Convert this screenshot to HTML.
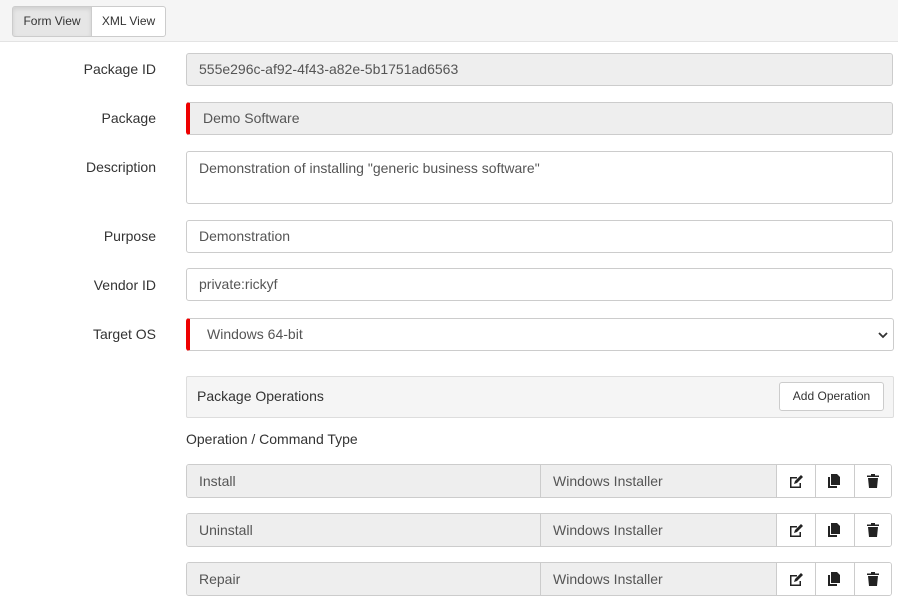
<!DOCTYPE html>
<html><head><style>
*{box-sizing:border-box;margin:0;padding:0}
body{width:898px;height:605px;overflow:hidden;background:#fff;font-family:"Liberation Sans",sans-serif;font-size:14px;color:#333;position:relative}
.top{position:absolute;left:0;top:0;width:898px;height:42px;background:#f5f5f5;border-bottom:1px solid #e3e3e3}
.btn{position:absolute;top:6px;height:31px;border:1px solid #ccc;font-size:12px;line-height:29px;text-align:center;color:#333}
.lbl{position:absolute;right:742px;font-size:14px;color:#333;text-align:right}
.in{position:absolute;left:186px;width:707px;height:33px;border:1px solid #ccc;border-radius:3px;padding-left:12px;line-height:31px;color:#555;font-size:14px}
.ro{background:#eee}
.req{border-left:4px solid #e00;padding-left:13px}
.row{position:absolute;left:186px;width:706px;height:34px;border:1px solid #ccc;border-radius:3px;overflow:hidden}
.row>div{position:absolute;top:0;height:32px;line-height:32px;color:#555}
.ic{width:39px;border-left:1px solid #ccc;background:#fff}
.ic svg{position:absolute;left:12px;top:9px}
</style></head><body>
<div class="top">
<div class="btn" style="left:12px;width:80px;background:#e6e6e6;border-radius:3px 0 0 3px;box-shadow:inset 0 2px 4px rgba(0,0,0,.1)">Form View</div>
<div class="btn" style="left:91px;width:75px;background:#fff;border-radius:0 3px 3px 0">XML View</div>
</div>
<div class="lbl" style="top:61px">Package ID</div>
<div class="in ro" style="top:53px">555e296c-af92-4f43-a82e-5b1751ad6563</div>
<div class="lbl" style="top:110px">Package</div>
<div class="in ro req" style="top:102px">Demo Software</div>
<div class="lbl" style="top:159px">Description</div>
<div class="in" style="top:151px;height:53px;line-height:20px;padding-top:6px">Demonstration of installing "generic business software"</div>
<div class="lbl" style="top:228px">Purpose</div>
<div class="in" style="top:220px">Demonstration</div>
<div class="lbl" style="top:277px">Vendor ID</div>
<div class="in" style="top:268px">private:rickyf</div>
<div class="lbl" style="top:326px">Target OS</div>
<div class="in req" style="top:318px;width:708px;padding-left:17px">Windows 64-bit<svg style="position:absolute;right:5px;top:12px" width="10" height="8" viewBox="0 0 10 8"><path d="M1 2l4 4 4-4" fill="none" stroke="#333" stroke-width="1.8"/></svg></div>
<div style="position:absolute;left:186px;top:376px;width:708px;height:42px;background:#f5f5f5;border:1px solid #ddd;border-radius:2px">
<div style="position:absolute;left:10px;top:11px;color:#333">Package Operations</div>
<div style="position:absolute;right:9px;top:5px;width:105px;height:29px;background:#fff;border:1px solid #ccc;border-radius:3px;font-size:12px;line-height:27px;text-align:center">Add Operation</div>
</div>
<div style="position:absolute;left:186px;top:431px">Operation / Command Type</div>
<!-- rows -->
<div class="row" style="top:464px"><div style="left:0;width:354px;background:#eee;padding-left:12px">Install</div><div style="left:353px;width:237px;background:#eee;border-left:1px solid #ccc;padding-left:12px">Windows Installer</div><div class="ic" style="left:589px"><svg width="15" height="14" viewBox="0 0 15 14"><path d="M1 3h7v1.5H2.5v8h8V9H12v5H1z" fill="#222"/><path d="M5 10l1-3 6-6 2 2-6 6z" fill="#222"/></svg></div><div class="ic" style="left:628px"><svg width="13" height="14" viewBox="0 0 13 14"><path d="M0 3h2v9h7v2H0z" fill="#222"/><path d="M3 0h6l3 3v8H3z" fill="#222"/></svg></div><div class="ic" style="left:667px"><svg width="12" height="14" viewBox="0 0 12 14"><path d="M0 1.5h4V0h4v1.5h4V3H0z" fill="#222"/><path d="M1 4h10l-1 10H2z" fill="#222"/></svg></div></div>
<div class="row" style="top:513px"><div style="left:0;width:354px;background:#eee;padding-left:12px">Uninstall</div><div style="left:353px;width:237px;background:#eee;border-left:1px solid #ccc;padding-left:12px">Windows Installer</div><div class="ic" style="left:589px"><svg width="15" height="14" viewBox="0 0 15 14"><path d="M1 3h7v1.5H2.5v8h8V9H12v5H1z" fill="#222"/><path d="M5 10l1-3 6-6 2 2-6 6z" fill="#222"/></svg></div><div class="ic" style="left:628px"><svg width="13" height="14" viewBox="0 0 13 14"><path d="M0 3h2v9h7v2H0z" fill="#222"/><path d="M3 0h6l3 3v8H3z" fill="#222"/></svg></div><div class="ic" style="left:667px"><svg width="12" height="14" viewBox="0 0 12 14"><path d="M0 1.5h4V0h4v1.5h4V3H0z" fill="#222"/><path d="M1 4h10l-1 10H2z" fill="#222"/></svg></div></div>
<div class="row" style="top:562px"><div style="left:0;width:354px;background:#eee;padding-left:12px">Repair</div><div style="left:353px;width:237px;background:#eee;border-left:1px solid #ccc;padding-left:12px">Windows Installer</div><div class="ic" style="left:589px"><svg width="15" height="14" viewBox="0 0 15 14"><path d="M1 3h7v1.5H2.5v8h8V9H12v5H1z" fill="#222"/><path d="M5 10l1-3 6-6 2 2-6 6z" fill="#222"/></svg></div><div class="ic" style="left:628px"><svg width="13" height="14" viewBox="0 0 13 14"><path d="M0 3h2v9h7v2H0z" fill="#222"/><path d="M3 0h6l3 3v8H3z" fill="#222"/></svg></div><div class="ic" style="left:667px"><svg width="12" height="14" viewBox="0 0 12 14"><path d="M0 1.5h4V0h4v1.5h4V3H0z" fill="#222"/><path d="M1 4h10l-1 10H2z" fill="#222"/></svg></div></div>
</body></html>
